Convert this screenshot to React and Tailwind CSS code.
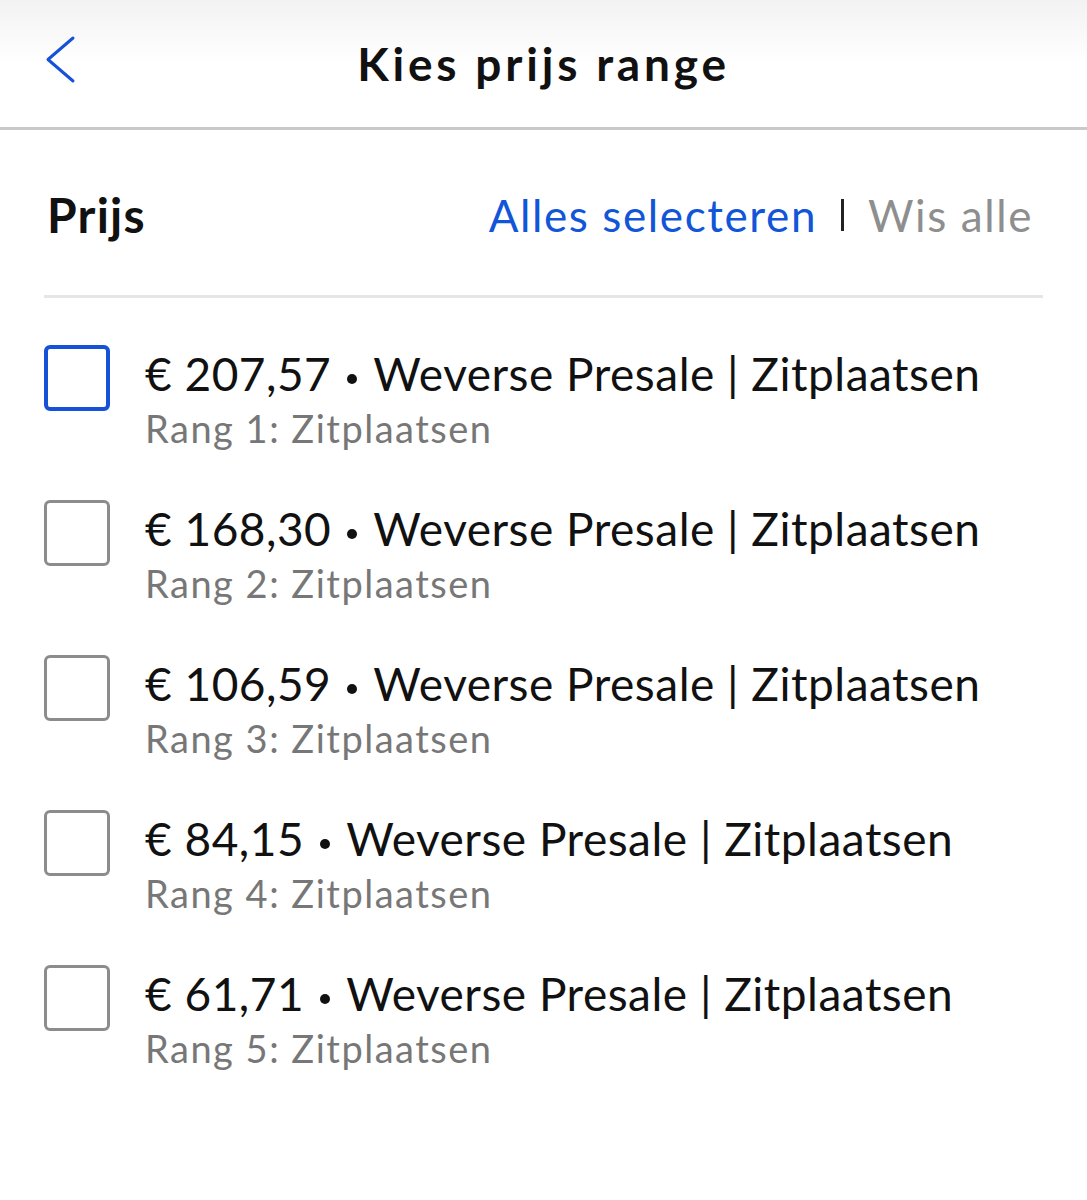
import React from 'react'

const rows = [
  { price: '€ 207,57', rang: 'Rang 1: Zitplaatsen', active: true },
  { price: '€ 168,30', rang: 'Rang 2: Zitplaatsen' },
  { price: '€ 106,59', rang: 'Rang 3: Zitplaatsen' },
  { price: '€ 84,15', rang: 'Rang 4: Zitplaatsen' },
  { price: '€ 61,71', rang: 'Rang 5: Zitplaatsen' },
]

export default function App() {
  return (
    <div className="w-[1087px] h-[1200px] bg-white" style={{ fontFamily: 'Lato, "Noto Sans", sans-serif' }}>
      <header className="relative h-[130px] border-b-[3px] border-[#c9c9c9] bg-gradient-to-b from-[#f2f2f2] via-white to-white flex items-center justify-center">
        <button className="absolute left-[44px] top-[35px]">
          <svg width="34" height="50" viewBox="0 0 34 50" fill="none">
            <path d="M29 3 L4 24.5 L29 46" stroke="#1652d8" strokeWidth="3" strokeLinecap="round" strokeLinejoin="round" />
          </svg>
        </button>
        <h1 className="text-[46px] font-bold text-[#111] tracking-[3.8px] -mt-[1px]">Kies prijs range</h1>
      </header>

      <div className="px-[44px]">
        <div className="flex items-center justify-between h-[168px] border-b-[3px] border-[#e6e6e6]">
          <h2 className="pl-[3px] text-[48px] font-bold text-[#111] tracking-[1.2px] mt-[4px]">Prijs</h2>
          <div className="flex items-center text-[44px] tracking-[1.6px] pr-[10px] mt-[4px]">
            <span className="text-[#1155d8]">Alles selecteren</span>
            <span className="mx-[24px] w-[3px] h-[32px] bg-[#222]" />
            <span className="text-[#8e8e8e]">Wis alle</span>
          </div>
        </div>

        <ul className="pt-[44px]">
          {rows.map((r) => (
            <li key={r.rang} className="flex items-start h-[155px]">
              <span
                className={
                  r.active
                    ? 'mt-[3px] w-[66px] h-[66px] shrink-0 rounded-[6px] border-[4px] border-[#1652d8]'
                    : 'mt-[3px] w-[66px] h-[66px] shrink-0 rounded-[6px] border-[3px] border-[#8c8c8c]'
                }
              />
              <div className="ml-[35px] mt-[2px]">
                <div className="text-[46px] leading-[60px] text-[#111] tracking-[0.5px] whitespace-nowrap">
                  {r.price}
                  <span className="inline-block align-middle mx-[16px] w-[10px] h-[10px] rounded-full bg-[#111]" />
                  Weverse Presale | Zitplaatsen
                </div>
                <div className="text-[38px] leading-[48px] text-[#777] tracking-[1.5px]">{r.rang}</div>
              </div>
            </li>
          ))}
        </ul>
      </div>
    </div>
  )
}
